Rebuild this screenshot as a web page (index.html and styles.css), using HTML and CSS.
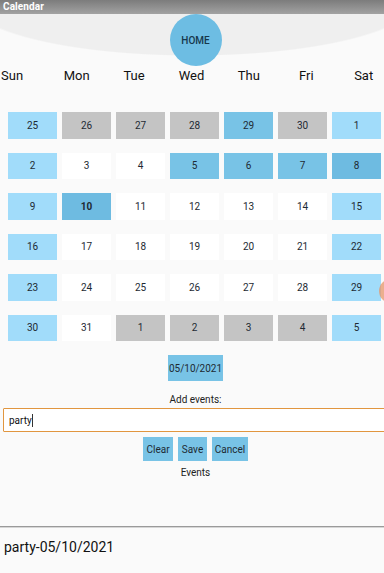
FILE: index.html
```html
<!DOCTYPE html>
<html>
<head>
<meta charset="utf-8">
<link rel="stylesheet" href="styles.css">
</head>
<body>
<div class="titlebar">Calendar</div>
<div class="app">
  <div class="centered">
    <div class="home">HOME</div>
  </div>
  <div class="days">
    <div class="day first">Sun</div>
    <div class="day">Mon</div>
    <div class="day">Tue</div>
    <div class="day">Wed</div>
    <div class="day">Thu</div>
    <div class="day">Fri</div>
    <div class="day">Sat</div>
  </div>
  <div class="grid">
    <div class="cell light">25</div><div class="cell gray">26</div><div class="cell gray">27</div><div class="cell gray">28</div><div class="cell mid">29</div><div class="cell gray">30</div><div class="cell light">1</div>
    <div class="cell light">2</div><div class="cell white">3</div><div class="cell white">4</div><div class="cell mid">5</div><div class="cell mid">6</div><div class="cell mid">7</div><div class="cell dark">8</div>
    <div class="cell light">9</div><div class="cell dark bold">10</div><div class="cell white">11</div><div class="cell white">12</div><div class="cell white">13</div><div class="cell white">14</div><div class="cell light">15</div>
    <div class="cell light">16</div><div class="cell white">17</div><div class="cell white">18</div><div class="cell white">19</div><div class="cell white">20</div><div class="cell white">21</div><div class="cell light">22</div>
    <div class="cell light">23</div><div class="cell white">24</div><div class="cell white">25</div><div class="cell white">26</div><div class="cell white">27</div><div class="cell white">28</div><div class="cell light">29</div>
    <div class="cell light">30</div><div class="cell white">31</div><div class="cell gray">1</div><div class="cell gray">2</div><div class="cell gray">3</div><div class="cell gray">4</div><div class="cell light">5</div>
  </div>
  <div class="centered">
    <div class="datebtn">05/10/2021</div>
    <div class="label">Add events:</div>
  </div>
  <div class="inputbox"><span class="typed">party</span><span class="caret"></span></div>
  <div class="centered">
    <div class="buttons">
      <div class="btn btn-clear">Clear</div>
      <div class="btn btn-save">Save</div>
      <div class="btn btn-cancel">Cancel</div>
    </div>
    <div class="label events">Events</div>
  </div>
  <div class="divider"></div>
  <div class="entry">party-05/10/2021</div>
  <div class="touch"></div>
</div>
</body>
</html>
```

FILE: styles.css
```css
html, body {
  margin: 0;
  padding: 0;
}
body {
  width: 384px;
  height: 573px;
  overflow: hidden;
  background: #fafafa;
  font-family: Roboto, "Noto Sans", sans-serif;
  color: #222;
  position: relative;
}
.titlebar {
  height: 14px;
  line-height: 14px;
  background: linear-gradient(#7c7c7c, #a2a2a2);
  color: #fff;
  font-size: 10px;
  font-weight: 700;
  padding-left: 3px;
  letter-spacing: 0.1px;
}
.app {
  height: 559px;
  background: radial-gradient(ellipse 226px 56px at 50% -14px, #efefef 98%, rgba(239,239,239,0) 100%) no-repeat, #fafafa;
  display: flex;
  flex-direction: column;
}
.centered {
  padding-left: 7px;
  display: flex;
  flex-direction: column;
  align-items: center;
}
.home {
  width: 52px;
  height: 52px;
  border-radius: 50%;
  background: #6dbde3;
  color: #17384c;
  font-size: 10px;
  font-weight: 500;
  display: flex;
  align-items: center;
  justify-content: center;
}
.days {
  margin-top: 2px;
  display: grid;
  grid-template-columns: 48px repeat(6, 57.4px);
  overflow: hidden;
  font-size: 13px;
  line-height: 16px;
  color: #111;
}
.day {
  text-align: center;
}
.day.first {
  text-align: left;
  padding-left: 1px;
}
.grid {
  margin-top: 28px;
  margin-left: 8px;
  display: grid;
  grid-template-columns: repeat(7, 49px);
  grid-auto-rows: 26.5px;
  column-gap: 5px;
  row-gap: 14px;
}
.cell {
  display: flex;
  align-items: center;
  justify-content: center;
  font-size: 10px;
  color: #1e2a33;
}
.cell.light { background: #a1dcfa; }
.cell.gray { background: #c4c4c4; }
.cell.mid { background: #78c3e6; }
.cell.dark { background: #6ebbe1; }
.cell.white { background: #ffffff; }
.cell.bold { font-weight: 700; }
.datebtn {
  margin-top: 14px;
  width: 55px;
  height: 26px;
  background: #78c3e6;
  font-size: 10px;
  display: flex;
  align-items: center;
  justify-content: center;
  color: #1e2a33;
}
.label {
  margin-top: 12px;
  font-size: 10px;
  line-height: 14px;
  color: #222;
}
.inputbox {
  margin-top: 1px;
  margin-left: 3px;
  width: 392px;
  height: 24px;
  box-sizing: border-box;
  border: 1px solid #e1963f;
  border-radius: 1px;
  background: #fff;
  display: flex;
  align-items: center;
  padding-left: 5px;
  font-size: 10px;
  color: #111;
}
.caret {
  display: inline-block;
  width: 1px;
  height: 13px;
  background: #333;
}
.buttons {
  margin-top: 5px;
  display: flex;
  gap: 5px;
}
.btn {
  height: 24px;
  background: #78c3e6;
  font-size: 10px;
  display: flex;
  align-items: center;
  justify-content: center;
  color: #1e2a33;
}
.btn-clear { width: 30px; }
.btn-save { width: 29px; }
.btn-cancel { width: 36px; }
.events {
  margin-top: 5px;
}
.divider {
  margin-top: 46px;
  height: 1px;
  background: #9a9a9a;
  box-shadow: 0 1px 0 #d6d6d6;
}
.entry {
  margin-top: 10px;
  padding-left: 4px;
  font-size: 14px;
  line-height: 20px;
  color: #111;
}
.touch {
  position: absolute;
  left: 379px;
  top: 279px;
  width: 24px;
  height: 24px;
  border-radius: 50%;
  background: rgba(230, 150, 105, 0.75);
}
```
